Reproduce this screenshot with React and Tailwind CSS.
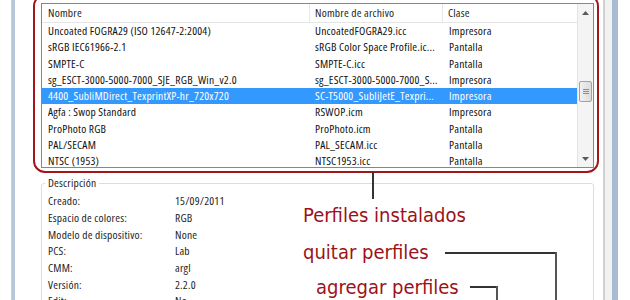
import React from "react";

const rows = [
  ["Uncoated FOGRA29 (ISO 12647-2:2004)", "UncoatedFOGRA29.icc", "Impresora"],
  ["sRGB IEC61966-2.1", "sRGB Color Space Profile.ic...", "Pantalla"],
  ["SMPTE-C", "SMPTE-C.icc", "Pantalla"],
  ["sg_ESCT-3000-5000-7000_SJE_RGB_Win_v2.0", "sg_ESCT-3000-5000-7000_S...", "Impresora"],
  ["4400_SubliMDirect_TexprintXP-hr_720x720", "SC-T5000_SubliJetE_Texpri...", "Impresora", true],
  ["Agfa : Swop Standard", "RSWOP.icm", "Impresora"],
  ["ProPhoto RGB", "ProPhoto.icm", "Pantalla"],
  ["PAL/SECAM", "PAL_SECAM.icc", "Pantalla"],
  ["NTSC (1953)", "NTSC1953.icc", "Pantalla"],
];

const details = [
  ["Creado:", "15/09/2011"],
  ["Espacio de colores:", "RGB"],
  ["Modelo de dispositivo:", "None"],
  ["PCS:", "Lab"],
  ["CMM:", "argl"],
  ["Versión:", "2.2.0"],
  ["Edit:", "No"],
];

const noteFont = { fontFamily: '"DejaVu Sans Condensed", "DejaVu Sans", sans-serif' };

function Scrollbar() {
  return (
    <div className="w-[16px] shrink-0 flex flex-col bg-[#f4f4f4] border-l border-[#e4e4e4]">
      <div className="h-[17px] flex items-center justify-center">
        <svg width="7" height="4" viewBox="0 0 7 4"><path d="M0 4L3.5 0L7 4Z" fill="#5a5a5a" /></svg>
      </div>
      <div className="h-[60px]" />
      <div className="mx-[1px] h-[21px] rounded-[2px] border border-[#9da3ad] bg-gradient-to-r from-[#f1f1f1] to-[#dcdcdc] flex flex-col items-center justify-center gap-[1px]">
        <div className="w-[6px] h-px bg-[#8a8a8a]" />
        <div className="w-[6px] h-px bg-[#8a8a8a]" />
        <div className="w-[6px] h-px bg-[#8a8a8a]" />
      </div>
      <div className="flex-1" />
      <div className="h-[17px] flex items-center justify-center">
        <svg width="7" height="4" viewBox="0 0 7 4"><path d="M0 0L3.5 4L7 0Z" fill="#5a5a5a" /></svg>
      </div>
    </div>
  );
}

function ProfileList() {
  return (
    <div className="border border-[#828790] bg-white flex h-[165px]">
      <div className="flex-1 min-w-0 flex flex-col">
        <div className="h-[19px] shrink-0 flex items-center border-b border-[#e5e5e5] text-[#1e1e1e]">
          <div className="w-[268px] shrink-0 pl-[6px] border-r border-[#e8e8e8] h-full flex items-center">Nombre</div>
          <div className="w-[133px] shrink-0 pl-[5px] border-r border-[#e8e8e8] h-full flex items-center">Nombre de archivo</div>
          <div className="flex-1 pl-[5px] h-full flex items-center">Clase</div>
        </div>
        {rows.map(([name, file, kind, sel]) => (
          <div
            key={name}
            className={
              "h-[16.25px] shrink-0 flex items-center whitespace-nowrap " +
              (sel ? "bg-[#3399ff] text-white" : "text-[#111]")
            }
          >
            <div className="w-[268px] shrink-0 pl-[6px]">{name}</div>
            <div className="w-[133px] shrink-0 pl-[5px]">{file}</div>
            <div className="flex-1 pl-[6px]">{kind}</div>
          </div>
        ))}
      </div>
      <Scrollbar />
    </div>
  );
}

export default function App() {
  return (
    <div
      className="w-[630px] h-[300px] bg-white overflow-hidden relative flex text-[11.5px] leading-[14px] tracking-[0.2px] font-stretch-[84%]"
      style={{ fontFamily: '"Open Sans", "Noto Sans", sans-serif' }}
    >
      <div className="w-[11px]" />
      <div className="w-[1px] bg-[#c8d2dd]" />
      <div className="w-[3px] bg-[#b7c6d8]" />
      <div className="w-[588px] pl-[18px] flex flex-col">
        <div className="-mt-[6px] w-[566px] border-2 border-[#a3161c] rounded-[12px] pl-[6px] pr-[3px] pt-[7px] pb-[3px]">
          <ProfileList />
        </div>
        <fieldset className="mt-[2px] ml-[8px] w-[553px] border border-[#d5dfe5] rounded-[3px] pb-[20px]">
          <legend className="ml-[3px] px-[3px] h-[16px] leading-[16px] text-[#1e1e1e]">Descripción</legend>
          <div className="pt-[2px] flex flex-col">
            {details.map(([k, v]) => (
              <div key={k} className="h-[16.7px] flex items-center text-[#1e1e1e]">
                <div className="w-[133px] pl-[6px]">{k}</div>
                <div>{v}</div>
              </div>
            ))}
          </div>
        </fieldset>
      </div>
      <div className="w-[2px] bg-[#d0d0d0]" />
      <div className="w-[7px] bg-[#f2f2f2]" />
      <div className="w-[6px] bg-[#a9bbd2]" />
      <div className="flex-1" />

      {/* annotations */}
      <div className="absolute left-[372px] top-[172px] w-[2px] h-[27px] bg-[#333]" />
      <div className="absolute left-[303px] top-[203px] text-[20px] leading-[24px] tracking-normal text-[#9c1218] whitespace-nowrap font-stretch-normal" style={noteFont}>
        Perfiles instalados
      </div>
      <div className="absolute left-[303px] top-[240px] text-[20px] leading-[24px] tracking-normal text-[#9c1218] whitespace-nowrap font-stretch-normal" style={noteFont}>
        quitar perfiles
      </div>
      <div className="absolute left-[316px] top-[275px] text-[20px] leading-[24px] tracking-normal text-[#9c1218] whitespace-nowrap font-stretch-normal" style={noteFont}>
        agregar perfiles
      </div>
      <div className="absolute left-[445px] top-[252px] w-[112px] h-[2px] bg-[#333]" />
      <div className="absolute left-[555px] top-[252px] w-[2px] h-[50px] bg-[#555]" />
      <div className="absolute left-[470px] top-[286px] w-[28px] h-[2px] bg-[#333]" />
      <div className="absolute left-[496px] top-[286px] w-[2px] h-[20px] bg-[#555]" />
    </div>
  );
}
